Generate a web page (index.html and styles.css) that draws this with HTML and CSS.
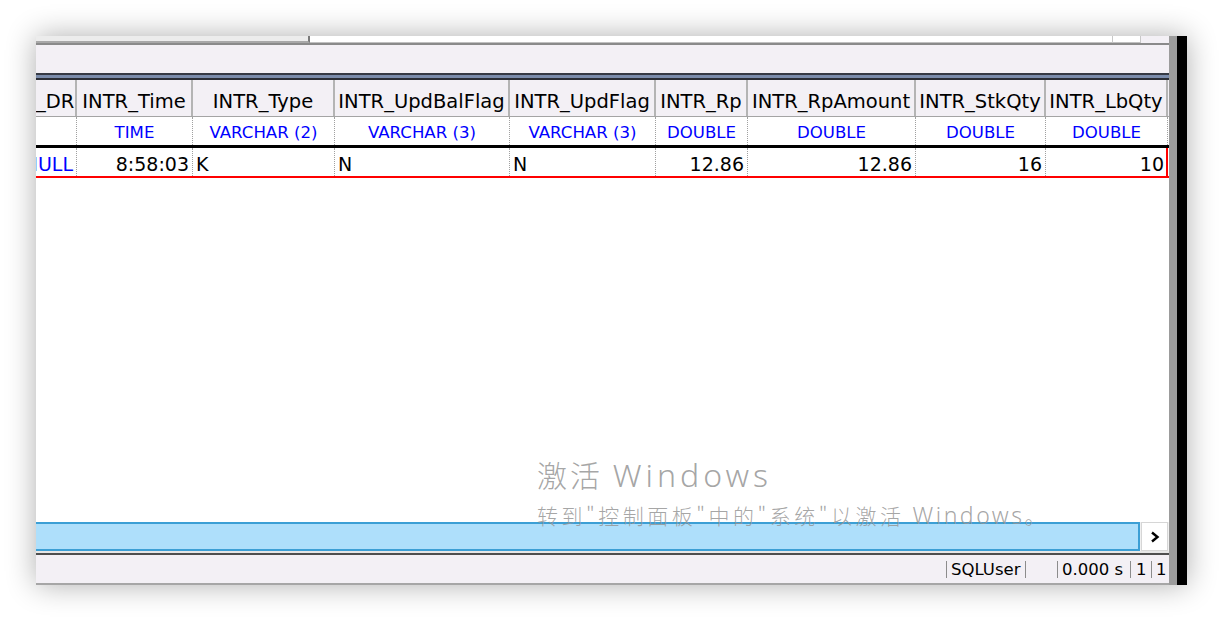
FILE: index.html
```html
<!DOCTYPE html>
<html lang="zh">
<head>
<meta charset="utf-8">
<title>Query result</title>
<link rel="stylesheet" href="styles.css">
</head>
<body>
<div class="window">
  <div class="main">
    <div class="topstrip">
      <div class="ts-a"></div>
      <div class="ts-b"></div>
      <div class="ts-c"></div>
      <div class="ts-d"></div>
    </div>
    <div class="toolbar"></div>
    <div class="band"></div>
    <div class="grid">
      <div class="row head">
        <div class="cell right">_DR</div>
        <div class="cell">INTR_Time</div>
        <div class="cell">INTR_Type</div>
        <div class="cell">INTR_UpdBalFlag</div>
        <div class="cell">INTR_UpdFlag</div>
        <div class="cell">INTR_Rp</div>
        <div class="cell">INTR_RpAmount</div>
        <div class="cell">INTR_StkQty</div>
        <div class="cell">INTR_LbQty</div>
      </div>
      <div class="row types">
        <div class="cell"></div>
        <div class="cell">TIME</div>
        <div class="cell">VARCHAR (2)</div>
        <div class="cell">VARCHAR (3)</div>
        <div class="cell">VARCHAR (3)</div>
        <div class="cell">DOUBLE</div>
        <div class="cell">DOUBLE</div>
        <div class="cell">DOUBLE</div>
        <div class="cell">DOUBLE</div>
      </div>
      <div class="row data">
        <div class="cell num null"><span>NULL</span></div>
        <div class="cell num"><span>8:58:03</span></div>
        <div class="cell txt"><span>K</span></div>
        <div class="cell txt"><span>N</span></div>
        <div class="cell txt"><span>N</span></div>
        <div class="cell num"><span>12.86</span></div>
        <div class="cell num"><span>12.86</span></div>
        <div class="cell num"><span>16</span></div>
        <div class="cell num last"><span>10</span></div>
      </div>
    </div>
    <div class="hscroll">
      <div class="thumb"></div>
      <div class="arrow">
        <svg width="12" height="12" viewBox="0 0 12 12"><path d="M3 1.5 L8.5 6 L3 10.5" fill="none" stroke="#000" stroke-width="2.4"/></svg>
      </div>
    </div>
    <div class="sep"></div>
    <div class="status">
      <div class="panel p-user">SQLUser</div>
      <div class="panel-gap"></div>
      <div class="panel p-time">0.000 s</div>
      <div class="panel p-one">1</div>
      <div class="panel p-two">1</div>
    </div>
    <div class="bottomline"></div>
  </div>
  <div class="edge"></div>
  <div class="blackbar"></div>
  <div class="watermark">
    <div class="wm1">激活 <span class="lat">Windows</span></div>
    <div class="wm2">转到"控制面板"中的"系统"以激活 <span class="lat2">Windows</span>。</div>
  </div>
</div>
</body>
</html>
```
FILE: styles.css
```css
html, body {
  margin: 0;
  padding: 0;
  background: #ffffff;
}
body {
  font-family: "DejaVu Sans", sans-serif;
  width: 1224px;
  height: 622px;
  overflow: hidden;
}
.window {
  position: relative;
  margin: 36px 0 0 36px;
  width: 1151px;
  height: 549px;
  display: flex;
  box-shadow: 0 0 28px rgba(0, 0, 0, 0.32);
}
.main {
  width: 1133px;
  display: flex;
  flex-direction: column;
  background: #f3f0f5;
}
.edge {
  width: 8px;
  background: #9c9c9c;
}
.blackbar {
  width: 10px;
  background: #000;
}
.topstrip {
  height: 7px;
  display: flex;
  border-bottom: 2px solid #8a8a8a;
}
.ts-a {
  width: 272px;
  background: #ececec;
  border-bottom: 2px solid #a8a8a8;
  border-right: 2px solid #7a7a7a;
}
.ts-b {
  width: 802px;
  background: #fff;
  border-bottom: 1px solid #c0c0c0;
  border-right: 1px solid #c8c8c8;
}
.ts-c {
  width: 27px;
  background: #fff;
  border-bottom: 1px solid #c0c0c0;
  border-right: 1px solid #c8c8c8;
}
.ts-d {
  flex: 1;
  background: #f3f0f5;
}
.toolbar {
  height: 28px;
  background: #f3f0f5;
}
.band {
  height: 7px;
  box-sizing: border-box;
  background: #7b8cab;
  border-top: 2px solid #363a44;
  border-bottom: 2px solid #2c2f36;
}
.grid {
  height: 442px;
  background: #fff;
}
.row {
  display: grid;
  grid-template-columns: 41px 116px 142px 175px 146px 92px 168px 130px 122px;
}
.cell {
  box-sizing: border-box;
  overflow: hidden;
  white-space: nowrap;
  text-align: center;
}
.head {
  height: 37px;
  background: #f3f0f5;
  border-bottom: 1px solid #a4a4a4;
  box-sizing: border-box;
}
.head .cell {
  font-size: 19.5px;
  color: #000;
  padding-top: 8px;
  line-height: 28px;
  border-right: 2px solid #b4b4b4;
}
.head .cell.right {
  text-align: right;
  padding-right: 2px;
}
.types {
  height: 28px;
  background: #fff;
  border-bottom: 3px solid #000;
  box-sizing: content-box;
}
.types .cell {
  font-size: 16.6px;
  color: #0000ff;
  padding-top: 4px;
  line-height: 24px;
  border-right: 1px dotted #a0a0a0;
}
.data {
  height: 28px;
  background: #fff;
  border-bottom: 2px solid #ff0000;
  box-sizing: content-box;
}
.data .cell {
  font-size: 19px;
  padding-top: 3px;
  line-height: 26px;
  color: #000;
  display: flex;
  border-right: 1px dotted #a0a0a0;
}
.data .cell.num {
  justify-content: flex-end;
  padding-right: 3px;
}
.data .cell.txt {
  justify-content: flex-start;
  padding-left: 3px;
}
.data .cell.null {
  color: #0000ff;
  padding-right: 3px;
}
.data .cell.last {
  border-right: 2px solid #ff0000;
  padding-right: 2px;
}
.hscroll {
  height: 29px;
  display: flex;
  background: #f0f0f0;
}
.thumb {
  width: 1104px;
  box-sizing: border-box;
  background: #aedffb;
  border: 2px solid #3c9fd5;
  border-left: none;
}
.arrow {
  width: 27px;
  margin-left: 1px;
  box-sizing: border-box;
  background: #fff;
  border: 1px solid #d6d6d6;
  display: flex;
  align-items: center;
  justify-content: center;
}
.arrow svg {
  display: block;
  margin-left: 1px;
}
.sep {
  height: 4px;
  box-sizing: border-box;
  background: #e6e6e6;
  border-bottom: 2px solid #4e4e4e;
}
.status {
  height: 28px;
  display: flex;
  align-items: center;
  justify-content: flex-end;
  padding-right: 1px;
  background: #f3f0f5;
  font-size: 16.5px;
  color: #000;
}
.panel {
  height: 17px;
  line-height: 17px;
  box-sizing: border-box;
  border-left: 1px solid #8c8c8c;
  white-space: nowrap;
  overflow: visible;
}
.p-user {
  width: 80px;
  padding-left: 4px;
  border-right: 1px solid #8c8c8c;
}
.panel-gap {
  width: 31px;
}
.p-time {
  width: 73px;
  padding-left: 4px;
}
.p-one {
  width: 21px;
  padding-left: 5px;
}
.p-two {
  width: 17px;
  padding-left: 4px;
}
.bottomline {
  height: 2px;
  background: #a6a6a6;
}
.watermark {
  position: absolute;
  left: 501px;
  top: 418px;
  color: rgba(150, 150, 150, 0.85);
  font-family: "Noto Sans", "Noto Sans CJK SC", sans-serif;
  font-weight: 300;
  pointer-events: none;
  white-space: nowrap;
}
.wm1 {
  font-size: 30px;
  line-height: 40px;
  font-family: "Noto Sans CJK SC", sans-serif;
  font-weight: 300;
  letter-spacing: 3px;
}
.wm1 .lat {
  font-family: "Noto Sans", sans-serif;
  font-weight: 300;
  letter-spacing: 4px;
  font-size: 32px;
}
.wm2 {
  margin-top: 5px;
  font-size: 21px;
  line-height: 30px;
  letter-spacing: 3.5px;
  font-family: "Noto Sans CJK SC", sans-serif;
}
.wm2 .lat2 {
  font-family: "Noto Sans", sans-serif;
  font-size: 23px;
  letter-spacing: 2.5px;
}
```
